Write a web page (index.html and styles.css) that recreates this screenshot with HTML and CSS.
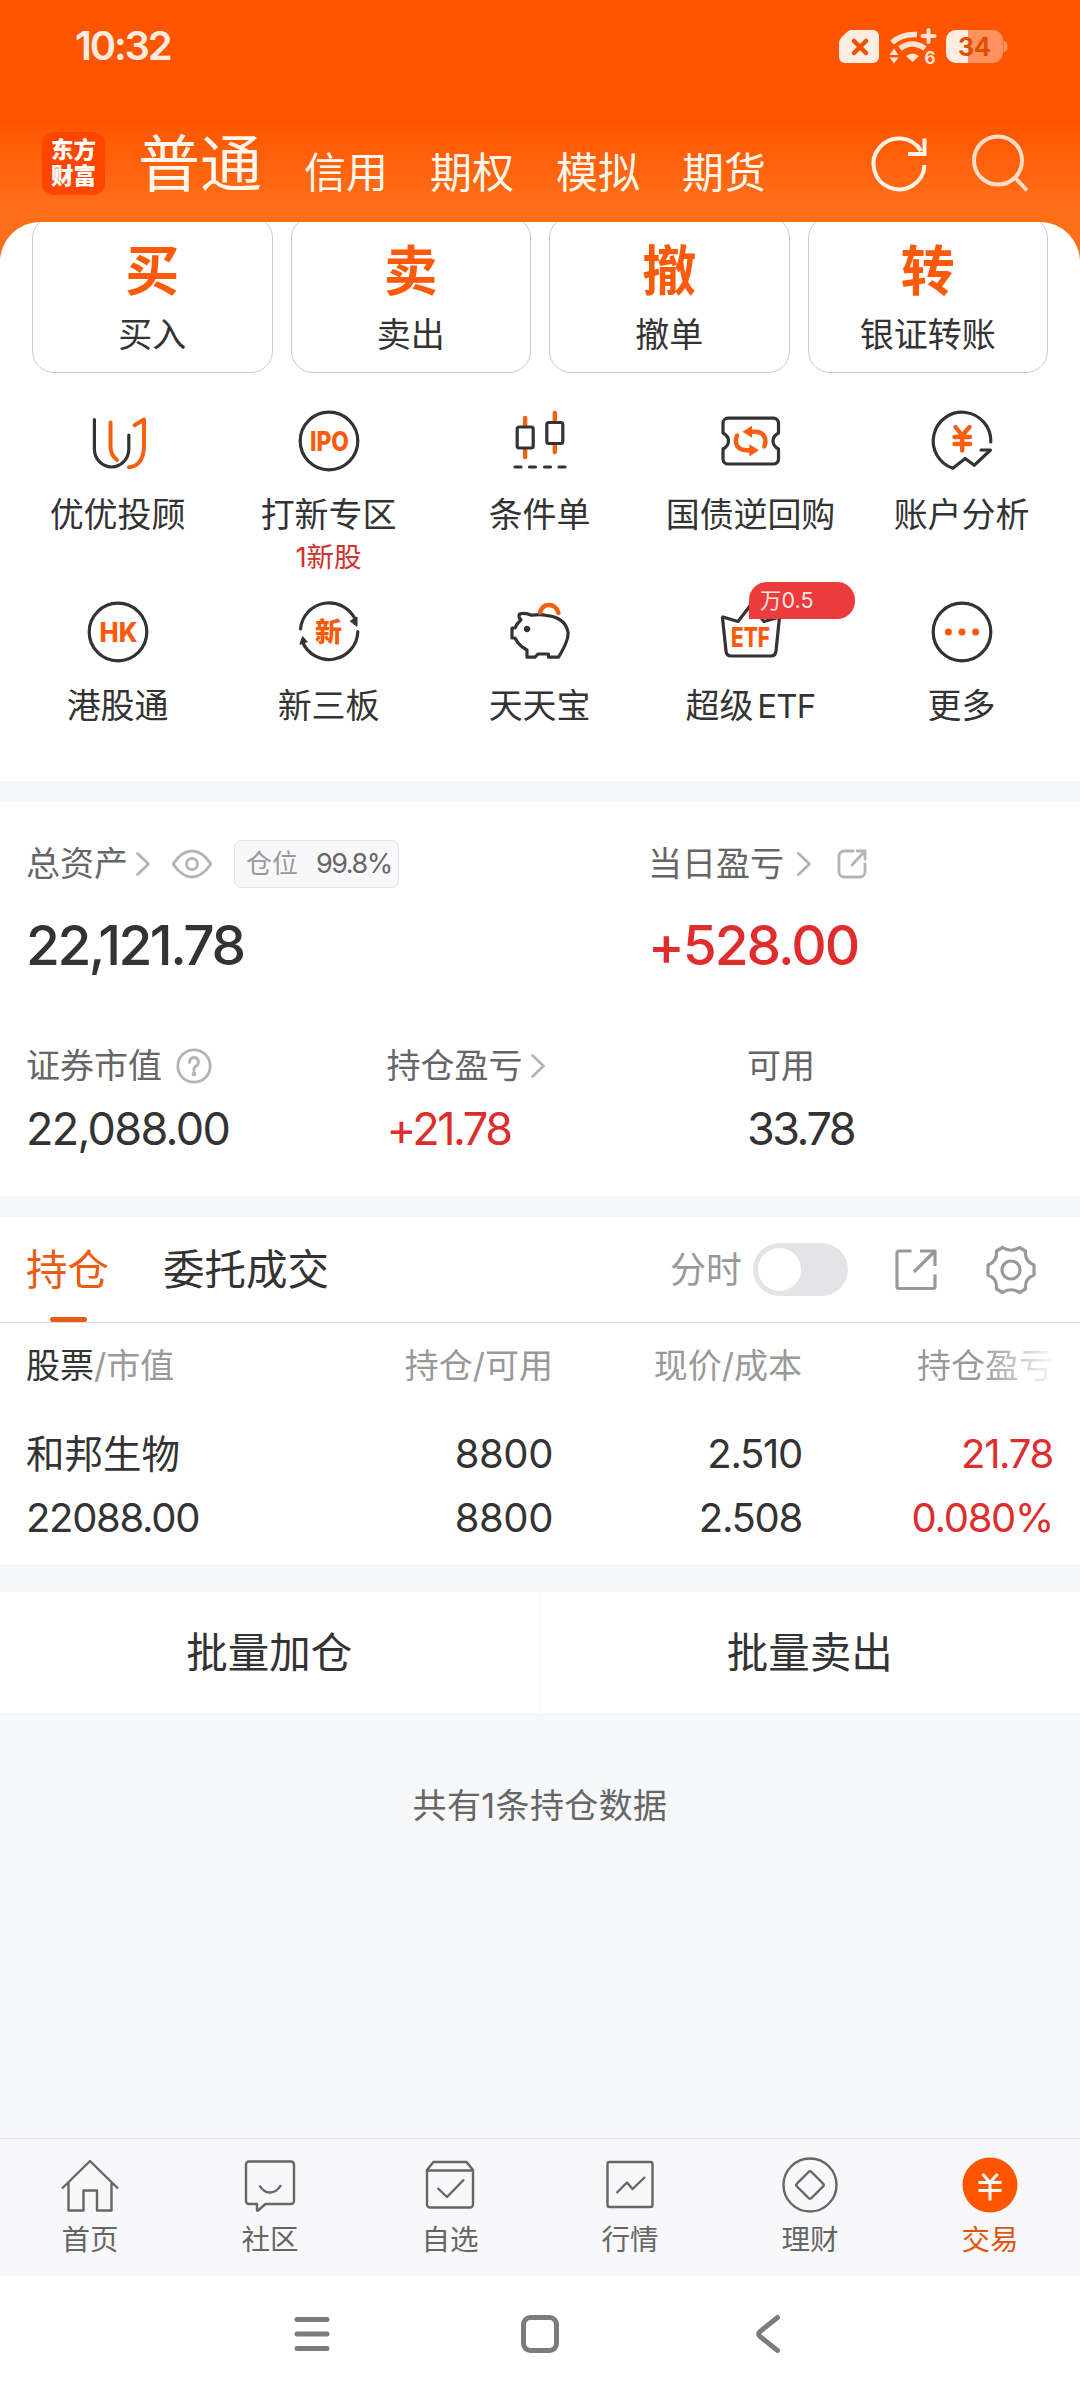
FILE: index.html
```html
<!DOCTYPE html>
<html lang="zh-CN">
<head>
    <meta charset="UTF-8" />
    <title>交易</title>
    <link rel="stylesheet" href="styles.css">
</head>
<body>

    <header class="top">
        <div class="status">
            <span class="hora">10:32</span>
            <svg class="status-icons" width="170" height="40" viewBox="0 0 170 40">
                <path d="M11 4H33a6 6 0 0 1 6 6V31a6 6 0 0 1-6 6H5a6 6 0 0 1-6-6V17q0-3 2-5l6-6q2-2 4-2z" fill="#ffece2"/>
                <path d="M14 15l12 12M26 15l-12 12" stroke="#f04f00" stroke-width="4.5" stroke-linecap="round"/>
                <path d="M52 16.500q10-9 25-8" fill="none" stroke="#ffe2d0" stroke-width="5.5"/>
                <path d="M60 22.500q12-9 25 0" fill="none" stroke="#ffe2d0" stroke-width="5.5"/>
                <path d="M72.500 36l-6.500-6q6.500-5 13 0z" fill="#ffe2d0"/>
                <path d="M88.500 4v12M82.500 10h12" stroke="#ffe2d0" stroke-width="4" stroke-linecap="round"/>
                <path d="M54 22.500l4.500 6.500h-9zM54 37.500l4.500-6h-9z" fill="#ffe2d0"/>
                <text x="84.500" y="37.500" class="wifi-num">6</text>
                <rect x="106" y="4" width="57" height="33" rx="10" fill="#ff935f"/>
                <path d="M163.500 14.500q4 1 4 6t-4 6z" fill="#ff935f"/>
                <path d="M116 4h12V37H116a10 10 0 0 1-10-10V14a10 10 0 0 1 10-10z" fill="#ffece2"/>
                <text x="134.500" y="30" class="bateria">34</text>
            </svg>
        </div>

        <nav class="cuentas">
            <div class="logo"><span>东方</span><span>财富</span></div>
            <a class="cuenta activa">普通</a>
            <a class="cuenta">信用</a>
            <a class="cuenta">期权</a>
            <a class="cuenta">模拟</a>
            <a class="cuenta">期货</a>
            <div class="acciones">
                <svg width="60" height="60" viewBox="0 0 60 60" fill="none" stroke="#fff3e8" stroke-width="4">
                    <path d="M54.500 31A25.500 25.500 0 1 1 51 17"/>
                    <path d="M54.500 4.500V20H38"/>
                </svg>
                <svg width="60" height="60" viewBox="0 0 60 60" fill="none" stroke="#ffdcc5" stroke-width="4">
                    <circle cx="28" cy="26.500" r="24"/>
                    <path d="M45 43.500L57 56.500"/>
                </svg>
            </div>
        </nav>
    </header>

    <main>
        <section class="panel rapido">
            <div class="tarjetas">
                <div class="tarjeta"><b>买</b><span>买入</span></div>
                <div class="tarjeta"><b>卖</b><span>卖出</span></div>
                <div class="tarjeta"><b>撤</b><span>撤单</span></div>
                <div class="tarjeta"><b>转</b><span>银证转账</span></div>
            </div>

            <div class="menu">
                <div class="item">
                    <svg class="icono" viewBox="0 0 64 64">
                        <path d="M8.400 10.500V40a17.200 18 0 0 0 34.400 0V26"/>
                        <path class="nar" d="M24.500 13.500V39q1 8 6.500 12M48.600 16.300L58 10.500V38q-1 19-15 20.200"/>
                    </svg>
                    <span class="nombre">优优投顾</span>
                </div>
                <div class="item">
                    <svg class="icono" viewBox="0 0 64 64">
                        <circle cx="32" cy="32" r="28.800"/>
                        <text x="13" y="41.500" textLength="39" lengthAdjust="spacingAndGlyphs">IPO</text>
                    </svg>
                    <span class="nombre">打新专区</span>
                    <span class="nota">1新股</span>
                </div>
                <div class="item">
                    <svg class="icono" viewBox="0 0 64 64">
                        <path class="nar ancha" d="M17.100 9v8M17.100 40v8M46.800 4v8M46.800 36v7"/>
                        <rect x="9.200" y="18" width="16" height="21" rx="2"/>
                        <rect x="38.800" y="13.500" width="16" height="21" rx="2"/>
                        <path d="M7 58h6M21.500 58h6M36.500 58h6M51 58h6"/>
                    </svg>
                    <span class="nombre">条件单</span>
                </div>
                <div class="item">
                    <svg class="icono" viewBox="0 0 64 64">
                        <path d="M9 9.200H54.500a5 5 0 0 1 5 5V24q-5.500 3-5.500 8t5.500 8V50a5 5 0 0 1-5 5H9a5 5 0 0 1-5-5V40q5.500-3 5.500-8T4 24V14.200a5 5 0 0 1 5-5z"/>
                        <g id="flecha">
                            <path class="nar ancha" d="M31 22.800h5q10.500.500 10.500 9.700q0 2-1.200 5"/>
                            <path class="relleno" d="M23.500 22.800l9.500-6v12z"/>
                        </g>
                        <use href="#flecha" transform="rotate(180 31.700 32)"/>
                    </svg>
                    <span class="nombre">国债逆回购</span>
                </div>
                <div class="item">
                    <svg class="icono" viewBox="0 0 64 64">
                        <path d="M60.800 33A28.800 28.800 0 1 0 22.800 59.300L35.200 49.500L44.200 56.300L60.500 41H51"/>
                        <path class="nar ancha" d="M25.500 18l6.700 8.500L39.500 18M32.200 27v14.500M24.500 28h15.500M24.500 35h15.500"/>
                    </svg>
                    <span class="nombre">账户分析</span>
                </div>

                <div class="item">
                    <svg class="icono" viewBox="0 0 64 64">
                        <circle cx="32" cy="32" r="28.800"/>
                        <text x="13.500" y="42" textLength="38" lengthAdjust="spacingAndGlyphs">HK</text>
                    </svg>
                    <span class="nombre">港股通</span>
                </div>
                <div class="item">
                    <svg class="icono" viewBox="0 0 64 64">
                        <path d="M3.500 29A28.800 28.800 0 0 1 58.500 20M60.800 31.500A28.800 28.800 0 0 1 5.500 42"/>
                        <path class="negro" d="M53.500 21l6.500-4v9zM3 44l2.500-7.500l4.500 5z"/>
                        <text class="xin" x="18" y="42">新</text>
                    </svg>
                    <span class="nombre">新三板</span>
                </div>
                <div class="item">
                    <svg class="icono" viewBox="0 0 64 64">
                        <path d="M4 28h3q2-5 6-8q-3-3-1.500-6q6-1.500 12 1.300q8-1.500 14 0Q57 17 60 32q1 8-9.500 25.200h-10V54H30l-3 3.200h-8V50q-8-4-12-12H4z"/>
                        <circle class="negro" cx="19" cy="29" r="2.800"/>
                        <path class="nar ancha" d="M32 12.500q2-7.500 9-7.500t9.500 8"/>
                    </svg>
                    <span class="nombre">天天宝</span>
                </div>
                <div class="item">
                    <svg class="icono" viewBox="0 0 64 64">
                        <path d="M4 17L19 21.500L31.700 5L45 21.500L60.500 17L57 51q-.500 5-5 5H12q-4.500 0-5-5L3.500 18z"/>
                        <text x="12" y="47" textLength="39" lengthAdjust="spacingAndGlyphs">ETF</text>
                    </svg>
                    <span class="nombre">超级<span class="latino">ETF</span></span>
                    <span class="globo">万0.5</span>
                </div>
                <div class="item">
                    <svg class="icono" viewBox="0 0 64 64">
                        <circle cx="32" cy="32" r="28.800"/>
                        <g class="relleno"><circle cx="18.400" cy="32" r="3.500"/><circle cx="32" cy="32" r="3.500"/><circle cx="45.600" cy="32" r="3.500"/></g>
                    </svg>
                    <span class="nombre">更多</span>
                </div>
            </div>
        </section>

        <section class="panel activos">
            <div class="resumen">
                <div class="total">
                    <div class="etiqueta">
                        <span>总资产</span>
                        <svg class="flecha" viewBox="0 0 14 24"><path d="M1.500 1.500L12.500 12L1.500 22.500"/></svg>
                        <svg class="ojo" width="42" height="30" viewBox="0 0 42 30"><path d="M2 15Q11 2 21 2T40 15Q31 28 21 28T2 15z"/><circle cx="21" cy="15" r="5.500"/></svg>
                        <span class="posicion"><i>仓位</i>99.8%</span>
                    </div>
                    <div class="cifra grande">22,121.78</div>
                </div>
                <div>
                    <div class="etiqueta">
                        <span>当日盈亏</span>
                        <svg class="flecha dia" viewBox="0 0 14 24"><path d="M1.500 1.500L12.500 12L1.500 22.500"/></svg>
                        <svg class="abrir" width="30" height="30" viewBox="0 0 30 30"><path d="M16 2H7a5 5 0 0 0-5 5V23a5 5 0 0 0 5 5H23a5 5 0 0 0 5-5V15M20 2h8v8M28 2L15 16"/></svg>
                    </div>
                    <div class="cifra grande sube dia">+528.00</div>
                </div>
            </div>
            <div class="detalle">
                <div>
                    <div class="etiqueta">
                        <span>证券市值</span>
                        <svg class="ayuda" width="36" height="36" viewBox="0 0 36 36"><circle cx="18" cy="18" r="16.200"/><path d="M13.500 14.500q.500-5 4.500-5t4.500 4.500q0 2.500-2.500 4t-2 4.500"/><circle class="punto" cx="18" cy="26" r="1"/></svg>
                    </div>
                    <div class="cifra">22,088.00</div>
                </div>
                <div>
                    <div class="etiqueta">
                        <span>持仓盈亏</span>
                        <svg class="flecha" viewBox="0 0 14 24"><path d="M1.500 1.500L12.500 12L1.500 22.500"/></svg>
                    </div>
                    <div class="cifra sube corta">+21.78</div>
                </div>
                <div>
                    <div class="etiqueta"><span>可用</span></div>
                    <div class="cifra corta">33.78</div>
                </div>
            </div>
        </section>

        <section class="panel posiciones">
            <div class="pestanas">
                <a class="pestana activa">持仓</a>
                <a class="pestana">委托成交</a>
                <div class="controles">
                    <span>分时</span>
                    <div class="interruptor"></div>
                    <svg width="42" height="42" viewBox="0 0 42 42"><path d="M16.500 2H4a2 2 0 0 0-2 2V37.500a2 2 0 0 0 2 2H38a2 2 0 0 0 2-2V25.500M25 2H40V17M40 2L19 23"/></svg>
                    <svg width="50" height="50" viewBox="0 0 50 50"><path d="M16.500 2.500Q25 8 33.500 2.500L39.500 6Q38.500 16.500 48 20V30Q38.500 33.500 39.500 44L33.500 47.500Q25 42 16.500 47.500L10.500 44Q11.500 33.500 2 30V20Q11.500 16.500 10.500 6z"/><circle cx="25" cy="25" r="9"/></svg>
                </div>
            </div>

            <div class="fila cabecera">
                <span><em>股票</em>/市值</span>
                <span>持仓/可用</span>
                <span>现价/成本</span>
                <span class="cortado">持仓盈亏</span>
            </div>
            <div class="fila">
                <span class="accion">和邦生物</span>
                <span class="cantidad">8800</span>
                <span>2.510</span>
                <span class="sube">21.78</span>
            </div>
            <div class="fila">
                <span>22088.00</span>
                <span class="cantidad">8800</span>
                <span>2.508</span>
                <span class="sube">0.080%</span>
            </div>
        </section>

        <section class="panel lote">
            <button>批量加仓</button>
            <button>批量卖出</button>
        </section>

        <p class="conteo">共有1条持仓数据</p>
    </main>

    <footer class="barra">
        <a class="tab">
            <svg viewBox="0 0 60 60"><path d="M2 32.500L30 5L58 32.500M8.500 27V54.500H23.500V34.500H37V54.500H51.500V27"/></svg>
            <span>首页</span>
        </a>
        <a class="tab">
            <svg viewBox="0 0 60 60"><path d="M9 5.500H51a3 3 0 0 1 3 3V45a3 3 0 0 1-3 3H25.500L18 54.500H17V48H9a3 3 0 0 1-3-3V8.500a3 3 0 0 1 3-3zM19.500 29.500q4 7 10.500 7t11-7.500"/></svg>
            <span>社区</span>
        </a>
        <a class="tab">
            <svg viewBox="0 0 60 60"><path d="M7 14L13.500 6H46.500L53 14V48.500a3 3 0 0 1-3 3H10a3 3 0 0 1-3-3zM7 14.500H53M17.500 32L27 41L44 23.500"/></svg>
            <span>自选</span>
        </a>
        <a class="tab">
            <svg viewBox="0 0 60 60"><rect x="7.500" y="6" width="45" height="45" rx="2"/><path d="M16.500 37L27 26.500L32.500 33L45 21"/></svg>
            <span>行情</span>
        </a>
        <a class="tab">
            <svg viewBox="0 0 60 60"><circle cx="30" cy="29" r="26.500"/><path d="M28.500 16Q30 14.500 31.500 16L43 27.500Q44.500 29 43 30.500L31.500 42Q30 43.500 28.500 42L17 30.500Q15.500 29 17 27.500z"/></svg>
            <span>理财</span>
        </a>
        <a class="tab activa">
            <svg viewBox="0 0 60 60"><circle class="relleno" cx="30" cy="29" r="27.500"/><path class="yuan" d="M22.500 18L30 26.500L37.500 18M30 26V44.500M18.500 26.500H41.500M18.500 34.500H41.500"/></svg>
            <span>交易</span>
        </a>
    </footer>

    <div class="sistema">
        <svg viewBox="0 0 44 44"><path d="M7 7.500H37M7 22H37M7 36.500H37"/></svg>
        <svg viewBox="0 0 44 44"><rect x="5.500" y="5.500" width="33" height="33" rx="7"/></svg>
        <svg viewBox="0 0 44 44"><path d="M31.500 5.500L14 19.500Q11.500 22 14 24.500L31.500 38.500"/></svg>
    </div>

</body>
</html>
```
FILE: styles.css
```css
body {
    margin: 0;
    width: 1080px;
    height: 2400px;
    overflow: hidden;
    display: flex;
    flex-direction: column;
    font-family: Inter, "Noto Sans CJK SC", sans-serif;
    font-size: 34px;
    line-height: 40px;
    color: #333;
    background: linear-gradient(#ff5500 120px, #ff6e18 205px, #ff701a 280px, #f7f8fa 280px);
}

svg {
    flex: none;
    overflow: visible;
}

/* Cabecera */
.top {
    height: 222px;
    color: #fff6ec;
}

.status {
    display: flex;
    justify-content: space-between;
    align-items: center;
    height: 92px;
    padding: 0 70px 0 75px;
}

.hora {
    font-size: 40px;
    font-weight: 600;
    letter-spacing: -2.2px;
    color: #ffece0;
}

.status-icons {
    margin-top: -1px;
}

.wifi-num {
    font-size: 17px;
    font-weight: 700;
    fill: #ffe2d0;
}

.bateria {
    font-size: 25px;
    font-weight: 700;
    text-anchor: middle;
    fill: #e24e00;
}

.cuentas {
    display: flex;
    align-items: center;
    height: 142px;
    padding: 0 50px 0 42px;
}

.logo {
    display: flex;
    flex-direction: column;
    align-items: center;
    justify-content: center;
    width: 63px;
    height: 63px;
    margin-right: 33px;
    border-radius: 12px;
    background: #ff4500;
    color: #fff;
    font-size: 22.5px;
    font-weight: 900;
    line-height: 26px;
}

.logo span {
    height: 26px;
}

.cuenta {
    height: 42px;
    margin: 20px 42px 0 0;
    font-size: 42px;
    line-height: 42px;
}

.cuenta.activa {
    height: 62px;
    margin-top: 4px;
    font-size: 62px;
    line-height: 62px;
}

.acciones {
    display: flex;
    gap: 40px;
    margin: 2px 0 0 auto;
}

/* Accesos */
.panel {
    background: #fff;
}

.rapido {
    height: 559px;
    border-radius: 40px 40px 0 0;
    overflow: hidden;
}

.tarjetas {
    display: grid;
    grid-template-columns: repeat(4, 1fr);
    gap: 18px;
    padding: 0 32px;
    margin-top: -6px;
}

.tarjeta {
    display: flex;
    flex-direction: column;
    align-items: center;
    box-sizing: border-box;
    height: 157px;
    padding-top: 25px;
    border: 1px solid #ccc;
    border-radius: 22px;
}

.tarjeta b {
    height: 60px;
    font-size: 54px;
    line-height: 60px;
    color: #fa5a0a;
}

.tarjeta span {
    height: 40px;
    margin-top: 13px;
}

.menu {
    display: grid;
    grid-template-columns: repeat(5, 211px);
    grid-auto-rows: 191px;
    padding: 36px 0 0 12px;
}

.item {
    position: relative;
    display: flex;
    flex-direction: column;
    align-items: center;
}

.icono {
    width: 64px;
    height: 64px;
    fill: none;
    stroke: #333;
    stroke-width: 3.2;
    stroke-linecap: round;
    stroke-linejoin: round;
}

.icono .nar {
    stroke: #f4600f;
    stroke-width: 4;
}

.icono .ancha {
    stroke-width: 4.4;
}

.icono .relleno {
    fill: #fa5a0a;
    stroke: none;
}

.icono .negro {
    fill: #333;
    stroke-width: 1;
}

.icono text {
    fill: #fa5a0a;
    stroke: none;
    font-size: 27px;
    font-weight: 800;
}

.nombre {
    height: 40px;
    margin-top: 22px;
    white-space: nowrap;
    letter-spacing: -0.1px;
}

.latino {
    margin-left: 4px;
    font-size: 33px;
    letter-spacing: -0.8px;
}

.nota {
    height: 32px;
    margin-top: 6px;
    font-size: 27.5px;
    line-height: 32px;
    color: #d0302e;
}

.globo {
    position: absolute;
    top: -18px;
    left: 104px;
    box-sizing: border-box;
    width: 106px;
    height: 37px;
    padding-left: 11px;
    border-radius: 18px 18px 18px 0;
    background: #eb3b3b;
    color: #ffe6e6;
    font-size: 21.5px;
    line-height: 37px;
}

/* Activos */
.activos {
    box-sizing: border-box;
    height: 394px;
    margin-top: 21px;
    padding: 38px 27px 0 26px;
}

.resumen {
    display: flex;
}

.total {
    width: 622px;
}

.etiqueta {
    display: flex;
    align-items: center;
    height: 47px;
    color: #666;
}

.etiqueta svg {
    fill: none;
    stroke: #b4b4b4;
    stroke-width: 2.8;
    stroke-linecap: round;
    stroke-linejoin: round;
}

.etiqueta .flecha {
    width: 14px;
    height: 24px;
    margin-left: 8px;
}

.etiqueta .flecha.dia {
    margin-left: 13px;
}

.ojo {
    margin-left: 21px;
}

.abrir {
    margin-left: 26px;
}

.ayuda {
    margin-left: 14px;
}

.posicion {
    display: flex;
    align-items: center;
    box-sizing: border-box;
    width: 165px;
    height: 48px;
    margin-left: 21px;
    padding-left: 11px;
    border: 1px solid #e2e2e4;
    border-radius: 7px;
    background: #f8f8fa;
    font-size: 27px;
    letter-spacing: -1.5px;
}

.posicion i {
    width: 70px;
    font-style: normal;
    font-size: 26px;
    letter-spacing: 0;
    color: #999;
}

.cifra {
    height: 50px;
    margin-top: 15px;
    font-size: 45px;
    line-height: 50px;
    letter-spacing: -1.7px;
}

.cifra.corta {
    letter-spacing: -2.5px;
}

.cifra.grande {
    height: 60px;
    margin-top: 28px;
    font-size: 55px;
    font-weight: 500;
    line-height: 60px;
    letter-spacing: -2.5px;
}

.cifra.grande.dia {
    letter-spacing: -2px;
}

.sube {
    color: #df2c2c;
}

.detalle {
    display: grid;
    grid-template-columns: repeat(3, 360.5px);
    margin-top: 67px;
}

/* Posiciones */
.posiciones {
    height: 348px;
    margin-top: 21px;
    border-bottom: 1px solid #eee;
}

.pestanas {
    display: flex;
    align-items: center;
    height: 105px;
    padding: 0 44px 0 26px;
    border-bottom: 1px solid #ddd;
}

.pestana {
    position: relative;
    height: 48px;
    margin-right: 54px;
    font-size: 41.5px;
    line-height: 48px;
}

.pestana.activa {
    color: #ea5c12;
}

.pestana.activa::after {
    content: "";
    position: absolute;
    bottom: -28px;
    left: 24px;
    width: 37px;
    height: 5px;
    border-radius: 3px;
    background: #ea5c12;
}

.controles {
    display: flex;
    align-items: center;
    margin-left: auto;
    font-size: 36px;
    color: #999;
}

.controles svg {
    margin-left: 49px;
    fill: none;
    stroke: #999;
    stroke-width: 3.2;
    stroke-linejoin: round;
}

.controles .interruptor + svg {
    margin-left: 47px;
}

.interruptor {
    box-sizing: border-box;
    width: 95px;
    height: 53px;
    margin-left: 11px;
    padding: 5px;
    border-radius: 27px;
    background: #e4e4e6;
}

.interruptor::before {
    content: "";
    display: block;
    width: 43px;
    height: 43px;
    border-radius: 50%;
    background: #fff;
}

.fila {
    display: grid;
    grid-template-columns: 1fr 251px 249px 251px;
    align-items: center;
    height: 64px;
    padding: 0 27px 0 26px;
    font-size: 40px;
    text-align: right;
    letter-spacing: -1.3px;
}

.fila span {
    height: 40px;
}

.fila span:first-child {
    text-align: left;
}

.fila .accion {
    font-size: 38.5px;
    letter-spacing: 0;
}

.fila .cantidad {
    letter-spacing: -0.4px;
}

.fila.cabecera {
    height: 86px;
    margin-bottom: 13px;
    font-size: 34px;
    letter-spacing: 0;
    color: #999;
}

.cabecera em {
    font-style: normal;
    color: #333;
}

.cabecera .cortado {
    -webkit-mask-image: linear-gradient(to right, #000 180px, transparent 256px);
    mask-image: linear-gradient(to right, #000 180px, transparent 256px);
}

.lote {
    display: flex;
    height: 121px;
    margin-top: 26px;
}

.lote button {
    flex: 1;
    border: none;
    padding: 0 1px 6px 0;
    background: none;
    font-family: inherit;
    font-size: 41.5px;
    color: #333;
}

.lote button + button {
    border-left: 1px solid #f4f4f6;
}

.conteo {
    height: 40px;
    margin: 73px 0 0;
    text-align: center;
    letter-spacing: 0.4px;
    color: #666;
}

/* Barra inferior */
.barra {
    display: flex;
    box-sizing: border-box;
    height: 138px;
    margin-top: auto;
    padding-top: 17px;
    border-top: 1px solid #e0e1e3;
    background: #f8f8fa;
}

.tab {
    flex: 1;
    display: flex;
    flex-direction: column;
    align-items: center;
    font-size: 28.5px;
    line-height: 34px;
    color: #666;
}

.tab svg {
    width: 60px;
    height: 60px;
    fill: none;
    stroke: #666;
    stroke-width: 2.4;
    stroke-linejoin: round;
}

.tab span {
    height: 34px;
    margin-top: 7px;
}

.tab.activa {
    color: #e0560f;
}

.tab .relleno {
    fill: #ff5500;
    stroke: none;
}

.tab .yuan {
    stroke: #fff;
    stroke-width: 3;
}

.sistema {
    display: flex;
    justify-content: center;
    align-items: center;
    gap: 184px;
    height: 124px;
    background: #fff;
}

.sistema svg {
    width: 44px;
    height: 44px;
    margin-top: -9px;
    fill: none;
    stroke: #7c7c7c;
    stroke-width: 5;
    stroke-linecap: round;
}
```
